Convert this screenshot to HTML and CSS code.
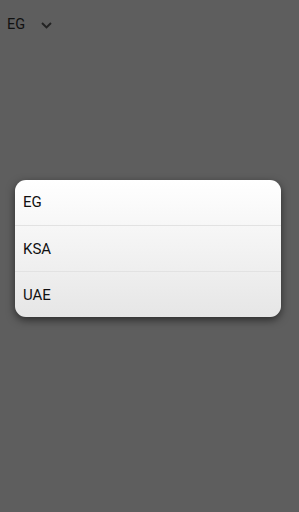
FILE: index.html
```html
<!DOCTYPE html>
<html lang="en">
<head>
    <meta charset="UTF-8">
    <meta name="viewport" content="width=device-width, initial-scale=1.0">
    <title>Country</title>
    <link rel="stylesheet" href="styles.css">
</head>
<body>
    <div class="picker">
        <span class="picker-value">EG</span>
        <svg class="chevron" width="11" height="7" viewBox="0 0 11 7">
            <path d="M1 1 L5.5 5.5 L10 1" fill="none" stroke="#222" stroke-width="1.9"/>
        </svg>
    </div>

    <div class="overlay">
        <div class="dialog">
            <div class="option">EG</div>
            <div class="option">KSA</div>
            <div class="option">UAE</div>
        </div>
    </div>
</body>
</html>
```

FILE: styles.css
```css
html, body {
    margin: 0;
    padding: 0;
    height: 100%;
}
body {
    font-family: Roboto, 'Noto Sans', sans-serif;
    background: #5e5e5e;
    color: #1a1a1a;
}
.picker {
    display: flex;
    align-items: center;
    height: 49px;
    padding-left: 7px;
    gap: 16px;
}
.picker-value {
    font-size: 14.5px;
    color: #111;
}
.chevron {
    margin-top: 1px;
}
.overlay {
    padding: 131px 18px 0 15px;
}
.dialog {
    background: linear-gradient(#ffffff, #e6e6e6);
    border-radius: 11px;
    box-shadow: 0 3px 8px rgba(0,0,0,0.55);
    overflow: hidden;
}
.option {
    height: 45px;
    line-height: 46px;
    padding-left: 8px;
    font-size: 15px;
    color: #111;
    border-top: 1px solid #e2e2e2;
}
.option:first-child {
    border-top: none;
    height: 45px;
    line-height: 45px;
}
```
